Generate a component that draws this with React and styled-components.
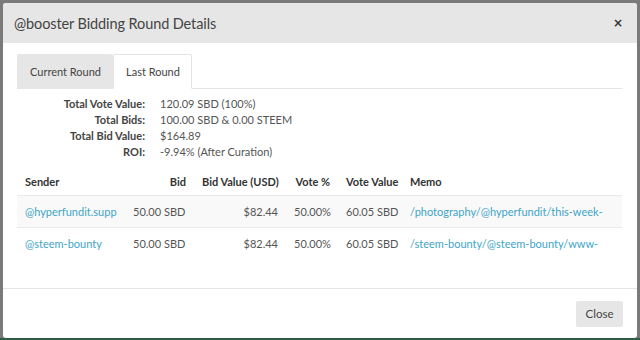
import React from 'react'
import styled, { createGlobalStyle } from 'styled-components'

const GlobalStyle = createGlobalStyle`
  html, body {
    margin: 0;
    padding: 0;
    background: #767676;
  }
  body {
    font-family: 'Lato', 'Open Sans', sans-serif;
    color: #555;
  }
`;

const Page = styled.div`
  width: 640px;
  height: 340px;
  padding: 3px 3px 2px 3px;
  box-sizing: border-box;
  background: linear-gradient(to bottom, #7a7a7a 0, #7a7a7a 338px, #2f5a45 338px);
`;

const Modal = styled.div`
  height: 335px;
  background: #fff;
  border-radius: 3px;
  display: flex;
  flex-direction: column;
  overflow: hidden;
`;

const Header = styled.div`
  height: 40px;
  background: #e6e6e6;
  display: flex;
  align-items: center;
  justify-content: space-between;
  padding: 0 14px 0 11px;
  box-sizing: border-box;
`;

const Title = styled.h4`
  margin: 0;
  font-family: 'Lato', sans-serif;
  font-weight: 400;
  font-size: 14.5px;
  letter-spacing: -0.1px;
  color: #444;
`;

const CloseX = styled.span`
  font-family: 'DejaVu Sans', sans-serif;
  font-size: 12px;
  font-weight: bold;
  color: #333;
  line-height: 1;
`;

const Body = styled.div`
  flex: 1;
  padding: 11px 15px 0 14px;
`;

const Tabs = styled.div`
  display: flex;
  border-bottom: 1px solid #e4e4e4;
  height: 34px;
`;

const Tab = styled.div`
  font-family: 'Lato', sans-serif;
  font-size: 11px;
  color: #444;
  display: flex;
  align-items: center;
  padding: 0 11px 0 12px;
  background: ${p => (p.$active ? '#fff' : '#e6e6e6')};
  border: 1px solid ${p => (p.$active ? '#e4e4e4' : 'transparent')};
  border-bottom-color: ${p => (p.$active ? '#fff' : 'transparent')};
  margin-bottom: -1px;
  border-radius: 2px 2px 0 0;
`;

const Summary = styled.div`
  display: grid;
  grid-template-columns: 128px auto;
  column-gap: 15px;
  margin-top: 7px;
  font-size: 11px;
  line-height: 16px;
`;

const Label = styled.div`
  text-align: right;
  font-weight: bold;
  color: #444;
`;

const Value = styled.div`
  color: #555;
`;

const Table = styled.table`
  margin-top: 7px;
  width: 100%;
  border-collapse: collapse;
  table-layout: fixed;
  font-size: 11px;
`;

const Th = styled.th`
  text-align: ${p => (p.$right ? 'right' : 'left')};
  font-weight: bold;
  color: #333;
  padding: 0 8px;
  height: 28px;
  white-space: nowrap;
`;

const Tr = styled.tr`
  background: ${p => (p.$striped ? '#f9f9f9' : '#fff')};
  border-top: 1px solid #eaeaea;
`;

const Td = styled.td`
  text-align: ${p => (p.$right ? 'right' : 'left')};
  padding: 0 8px;
  height: 31px;
  white-space: nowrap;
  overflow: hidden;
  color: ${p => (p.$link ? '#3ea5c7' : '#555')};
`;

const Footer = styled.div`
  border-top: 1px solid #e5e5e5;
  height: 50px;
  display: flex;
  align-items: center;
  justify-content: flex-end;
  padding: 0 14px;
  box-sizing: border-box;
`;

const Button = styled.button`
  font-family: 'Lato', sans-serif;
  font-size: 11.5px;
  color: #444;
  background: #e6e6e6;
  border: none;
  border-radius: 2px;
  width: 47px;
  height: 26px;
  padding: 0;
`;

const rows = [
  {
    sender: '@hyperfundit.supp',
    bid: '50.00 SBD',
    usd: '$82.44',
    pct: '50.00%',
    vote: '60.05 SBD',
    memo: '/photography/@hyperfundit/this-week-',
  },
  {
    sender: '@steem-bounty',
    bid: '50.00 SBD',
    usd: '$82.44',
    pct: '50.00%',
    vote: '60.05 SBD',
    memo: '/steem-bounty/@steem-bounty/www-',
  },
];

export default function App() {
  return (
    <Page>
      <GlobalStyle />
      <Modal>
        <Header>
          <Title>@booster Bidding Round Details</Title>
          <CloseX>×</CloseX>
        </Header>
        <Body>
          <Tabs>
            <Tab>Current Round</Tab>
            <Tab $active>Last Round</Tab>
          </Tabs>
          <Summary>
            <Label>Total Vote Value:</Label>
            <Value>120.09 SBD (100%)</Value>
            <Label>Total Bids:</Label>
            <Value>100.00 SBD &amp; 0.00 STEEM</Value>
            <Label>Total Bid Value:</Label>
            <Value>$164.89</Value>
            <Label>ROI:</Label>
            <Value>-9.94% (After Curation)</Value>
          </Summary>
          <Table>
            <colgroup>
              <col style={{ width: 108 }} />
              <col style={{ width: 69 }} />
              <col style={{ width: 92 }} />
              <col style={{ width: 52 }} />
              <col style={{ width: 64 }} />
              <col />
            </colgroup>
            <thead>
              <tr>
                <Th>Sender</Th>
                <Th $right>Bid</Th>
                <Th $right>Bid Value (USD)</Th>
                <Th $right>Vote %</Th>
                <Th $right>Vote Value</Th>
                <Th>Memo</Th>
              </tr>
            </thead>
            <tbody>
              {rows.map((r, i) => (
                <Tr key={r.sender} $striped={i === 0}>
                  <Td $link>{r.sender}</Td>
                  <Td>{r.bid}</Td>
                  <Td $right>{r.usd}</Td>
                  <Td $right>{r.pct}</Td>
                  <Td $right>{r.vote}</Td>
                  <Td $link>{r.memo}</Td>
                </Tr>
              ))}
            </tbody>
          </Table>
        </Body>
        <Footer>
          <Button>Close</Button>
        </Footer>
      </Modal>
    </Page>
  );
}
